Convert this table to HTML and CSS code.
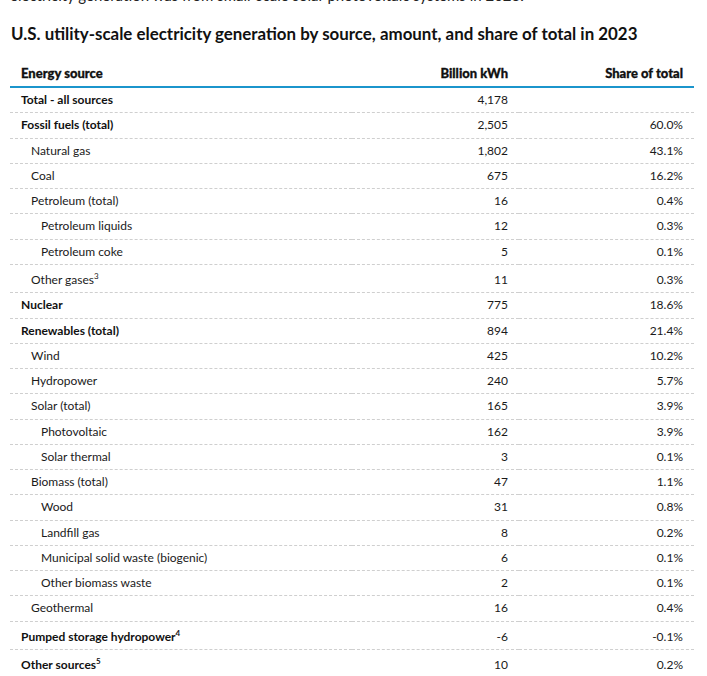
FILE: index.html
```html
<!DOCTYPE html>
<html lang="en">
<head>
<meta charset="utf-8">
<title>U.S. utility-scale electricity generation</title>
<link rel="stylesheet" href="styles.css">
</head>
<body>
<main class="page">
  <p class="lead">electricity generation was from small-scale solar photovoltaic systems in 2023.</p>
  <h2 class="title">U.S. utility-scale electricity generation by source, amount, and share of total in 2023</h2>
  <table class="data">
    <colgroup>
      <col class="c-src">
      <col class="c-amt">
      <col class="c-share">
    </colgroup>
    <thead>
      <tr><th class="src">Energy source</th><th class="num">Billion kWh</th><th class="num">Share of total</th></tr>
    </thead>
    <tbody>
      <tr class="b"><td>Total - all sources</td><td class="num">4,178</td><td class="num"></td></tr>
      <tr class="b"><td>Fossil fuels (total)</td><td class="num">2,505</td><td class="num">60.0%</td></tr>
      <tr class="l1"><td>Natural gas</td><td class="num">1,802</td><td class="num">43.1%</td></tr>
      <tr class="l1"><td>Coal</td><td class="num">675</td><td class="num">16.2%</td></tr>
      <tr class="l1"><td>Petroleum (total)</td><td class="num">16</td><td class="num">0.4%</td></tr>
      <tr class="l2"><td>Petroleum liquids</td><td class="num">12</td><td class="num">0.3%</td></tr>
      <tr class="l2"><td>Petroleum coke</td><td class="num">5</td><td class="num">0.1%</td></tr>
      <tr class="l1 tall"><td>Other gases<sup>3</sup></td><td class="num">11</td><td class="num">0.3%</td></tr>
      <tr class="b"><td>Nuclear</td><td class="num">775</td><td class="num">18.6%</td></tr>
      <tr class="b"><td>Renewables (total)</td><td class="num">894</td><td class="num">21.4%</td></tr>
      <tr class="l1"><td>Wind</td><td class="num">425</td><td class="num">10.2%</td></tr>
      <tr class="l1"><td>Hydropower</td><td class="num">240</td><td class="num">5.7%</td></tr>
      <tr class="l1"><td>Solar (total)</td><td class="num">165</td><td class="num">3.9%</td></tr>
      <tr class="l2"><td>Photovoltaic</td><td class="num">162</td><td class="num">3.9%</td></tr>
      <tr class="l2"><td>Solar thermal</td><td class="num">3</td><td class="num">0.1%</td></tr>
      <tr class="l1"><td>Biomass (total)</td><td class="num">47</td><td class="num">1.1%</td></tr>
      <tr class="l2"><td>Wood</td><td class="num">31</td><td class="num">0.8%</td></tr>
      <tr class="l2"><td>Landfill gas</td><td class="num">8</td><td class="num">0.2%</td></tr>
      <tr class="l2"><td>Municipal solid waste (biogenic)</td><td class="num">6</td><td class="num">0.1%</td></tr>
      <tr class="l2"><td>Other biomass waste</td><td class="num">2</td><td class="num">0.1%</td></tr>
      <tr class="l1"><td>Geothermal</td><td class="num">16</td><td class="num">0.4%</td></tr>
      <tr class="b tall"><td>Pumped storage hydropower<sup>4</sup></td><td class="num">-6</td><td class="num">-0.1%</td></tr>
      <tr class="b tall"><td>Other sources<sup>5</sup></td><td class="num">10</td><td class="num">0.2%</td></tr>
    </tbody>
  </table>
</main>
</body>
</html>
```
FILE: styles.css
```css
html, body {
  margin: 0;
  padding: 0;
  background: #ffffff;
}

body {
  font-family: Lato, "Noto Sans", sans-serif;
  color: #1a1a1a;
  overflow: hidden;
}

.page {
  padding: 0 13px 0 10px;
}

.lead {
  margin: -15px 0 0 0;
  font-size: 15px;
  line-height: 21px;
  color: #222;
}

.title {
  margin: 18px 0 16px 1px;
  font-size: 16.9px;
  line-height: 20px;
  font-weight: 700;
  color: #111;
}

.data {
  width: 684px;
  table-layout: fixed;
  border-collapse: collapse;
  font-size: 12px;
}

.c-src { width: 342px; }
.c-amt { width: 167px; }
.c-share { width: 175px; }

.data th {
  height: 26px;
  padding: 0 11px;
  font-size: 13px;
  font-weight: 900;
  -webkit-text-stroke: 0.3px #111;
  text-align: left;
  border-bottom: 2px solid #1b95cc;
  color: #111;
}

.data td {
  height: 24.25px;
  padding: 0 11px;
  border-bottom: 1px dashed #cfcfcf;
  line-height: 14px;
}

.data tbody tr:last-child td {
  border-bottom: none;
}

.data .num {
  text-align: right;
}

.data tr.b td:first-child {
  font-weight: 700;
  color: #111;
}

.data tr.l1 td:first-child {
  padding-left: 21px;
}

.data tr.l2 td:first-child {
  padding-left: 31px;
}

.data tr.tall td {
  height: 24.5px;
  padding-top: 3px;
}

sup {
  font-size: 8px;
  line-height: 0;
  vertical-align: 5px;
  font-weight: inherit;
}
```
